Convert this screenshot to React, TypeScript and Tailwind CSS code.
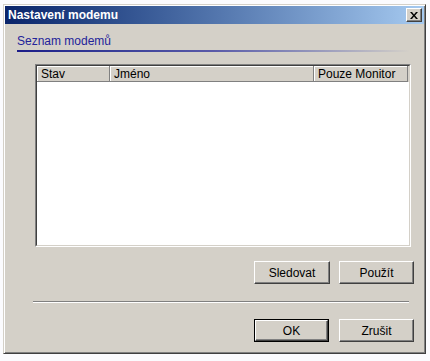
const raised =
  "border border-t-white border-l-white border-r-[#404040] border-b-[#404040] shadow-[inset_-1px_-1px_0_#808080]";

const columns = [
  { label: "Stav", width: "w-[73px]" },
  { label: "Jméno", width: "w-[204px]" },
  { label: "Pouze Monitor", width: "w-[94px]" },
];

const DialogButton = ({
  label,
  isDefault = false,
  width = "w-[75px]",
}: {
  label: string;
  isDefault?: boolean;
  width?: string;
}) => {
  if (isDefault) {
    return (
      <button
        type="button"
        className={`h-[23px] ${width} border border-black bg-[#d4d0c8] p-0`}
      >
        <span
          className={`flex h-full w-full items-center justify-center ${raised} text-[12px] text-black`}
        >
          {label}
        </span>
      </button>
    );
  }
  return (
    <button
      type="button"
      className={`flex h-[23px] ${width} items-center justify-center bg-[#d4d0c8] ${raised} text-[12px] text-black`}
    >
      {label}
    </button>
  );
};

export default function App() {
  return (
    <div className="h-[361px] w-[430px] bg-[#fbfbfe] pl-[3px] pt-[4px] font-['Liberation_Sans',Arial,sans-serif]">
      <div className="flex h-[350px] w-[423px] flex-col border border-t-[#d4d0c8] border-l-[#d4d0c8] border-r-[#404040] border-b-[#404040] bg-[#d4d0c8] shadow-[inset_1px_1px_0_#ffffff,inset_-1px_-1px_0_#808080] p-[1px]">
        {/* title bar */}
        <div className="flex h-[18px] items-center justify-between bg-gradient-to-r from-[#0a246a] to-[#a6caf0] pl-[3px] pr-[2px]">
          <span className="text-[12px] font-bold leading-none text-white">
            Nastavení modemu
          </span>
          <button
            type="button"
            className={`flex h-[14px] w-[16px] items-center justify-center bg-[#d4d0c8] p-0 ${raised}`}
            aria-label="Zavřít"
          >
            <svg width="8" height="7" viewBox="0 0 8 7" className="block">
              <path
                d="M0 0h2l2 2.5L6 0h2L5 3.5 8 7H6L4 4.5 2 7H0l3-3.5z"
                fill="#000"
              />
            </svg>
          </button>
        </div>

        {/* section header */}
        <div className="ml-[12px] mt-[10px] text-[12px] leading-[15px] text-[#23239a]">
          Seznam modemů
        </div>
        <div className="ml-[12px] mt-[1px] h-[2px] w-[393px] bg-gradient-to-r from-[#1c1c88] via-[#5a5aa8] to-[#d4d0c8]" />

        {/* modem list */}
        <div className="ml-[30px] mt-[12px] h-[183px] w-[376px] border border-t-[#808080] border-l-[#808080] border-r-white border-b-white">
          <div className="flex h-full flex-col border border-t-[#404040] border-l-[#404040] border-r-[#d4d0c8] border-b-[#d4d0c8] bg-white">
            <div className="flex h-[16px] bg-[#d4d0c8]">
              {columns.map((col) => (
                <div
                  key={col.label}
                  className={`${col.width} flex items-center border-r border-b border-r-[#808080] border-b-[#808080] shadow-[inset_1px_1px_0_#ffffff] pl-[4px] text-[12px] leading-none text-black`}
                >
                  {col.label}
                </div>
              ))}
              <div className="flex-1" />
            </div>
            <div className="flex-1 bg-white" />
          </div>
        </div>

        {/* list actions */}
        <div className="mt-[14px] flex justify-end gap-[9px] pr-[10px]">
          <DialogButton label="Sledovat" width="w-[76px]" />
          <DialogButton label="Použít" />
        </div>

        {/* separator */}
        <div className="ml-[28px] mt-[17px] w-[376px] border-t border-b border-t-[#808080] border-b-white" />

        {/* dialog actions */}
        <div className="mt-[16px] flex justify-end gap-[10px] pr-[10px]">
          <DialogButton label="OK" isDefault />
          <DialogButton label="Zrušit" />
        </div>
      </div>
    </div>
  );
}
